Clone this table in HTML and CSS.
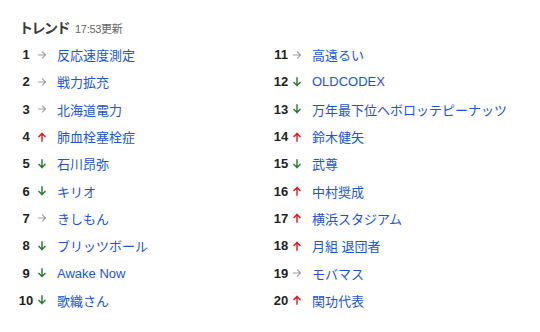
FILE: index.html
```html
<!DOCTYPE html>
<html lang="ja">
<head>
<meta charset="utf-8">
<title>トレンド</title>
<link rel="stylesheet" href="styles.css">
</head>
<body>
<div class="card">
  <div class="head"><span class="title">トレンド</span><span class="time">17:53更新</span></div>
  <ol class="list">
    <li><span class="num">1</span><span class="arw"><svg viewBox="0 0 10 10"><path class="same" d="M1.5 5H8.5M5.5 2L8.5 5L5.5 8"/></svg></span><a href="#">反応速度測定</a></li>
    <li><span class="num">2</span><span class="arw"><svg viewBox="0 0 10 10"><path class="same" d="M1.5 5H8.5M5.5 2L8.5 5L5.5 8"/></svg></span><a href="#">戦力拡充</a></li>
    <li><span class="num">3</span><span class="arw"><svg viewBox="0 0 10 10"><path class="same" d="M1.5 5H8.5M5.5 2L8.5 5L5.5 8"/></svg></span><a href="#">北海道電力</a></li>
    <li><span class="num">4</span><span class="arw"><svg viewBox="0 0 10 10"><path class="up" d="M5 9V1.5M2 4.5L5 1.5L8 4.5"/></svg></span><a href="#">肺血栓塞栓症</a></li>
    <li><span class="num">5</span><span class="arw"><svg viewBox="0 0 10 10"><path class="down" d="M5 1V8.5M2 5.5L5 8.5L8 5.5"/></svg></span><a href="#">石川昂弥</a></li>
    <li><span class="num">6</span><span class="arw"><svg viewBox="0 0 10 10"><path class="down" d="M5 1V8.5M2 5.5L5 8.5L8 5.5"/></svg></span><a href="#">キリオ</a></li>
    <li><span class="num">7</span><span class="arw"><svg viewBox="0 0 10 10"><path class="same" d="M1.5 5H8.5M5.5 2L8.5 5L5.5 8"/></svg></span><a href="#">きしもん</a></li>
    <li><span class="num">8</span><span class="arw"><svg viewBox="0 0 10 10"><path class="down" d="M5 1V8.5M2 5.5L5 8.5L8 5.5"/></svg></span><a href="#">ブリッツボール</a></li>
    <li><span class="num">9</span><span class="arw"><svg viewBox="0 0 10 10"><path class="down" d="M5 1V8.5M2 5.5L5 8.5L8 5.5"/></svg></span><a href="#">Awake Now</a></li>
    <li><span class="num">10</span><span class="arw"><svg viewBox="0 0 10 10"><path class="down" d="M5 1V8.5M2 5.5L5 8.5L8 5.5"/></svg></span><a href="#">歌織さん</a></li>
    <li><span class="num">11</span><span class="arw"><svg viewBox="0 0 10 10"><path class="same" d="M1.5 5H8.5M5.5 2L8.5 5L5.5 8"/></svg></span><a href="#">高遠るい</a></li>
    <li><span class="num">12</span><span class="arw"><svg viewBox="0 0 10 10"><path class="down" d="M5 1V8.5M2 5.5L5 8.5L8 5.5"/></svg></span><a href="#">OLDCODEX</a></li>
    <li><span class="num">13</span><span class="arw"><svg viewBox="0 0 10 10"><path class="down" d="M5 1V8.5M2 5.5L5 8.5L8 5.5"/></svg></span><a href="#">万年最下位ヘボロッテピーナッツ</a></li>
    <li><span class="num">14</span><span class="arw"><svg viewBox="0 0 10 10"><path class="up" d="M5 9V1.5M2 4.5L5 1.5L8 4.5"/></svg></span><a href="#">鈴木健矢</a></li>
    <li><span class="num">15</span><span class="arw"><svg viewBox="0 0 10 10"><path class="down" d="M5 1V8.5M2 5.5L5 8.5L8 5.5"/></svg></span><a href="#">武尊</a></li>
    <li><span class="num">16</span><span class="arw"><svg viewBox="0 0 10 10"><path class="up" d="M5 9V1.5M2 4.5L5 1.5L8 4.5"/></svg></span><a href="#">中村奨成</a></li>
    <li><span class="num">17</span><span class="arw"><svg viewBox="0 0 10 10"><path class="up" d="M5 9V1.5M2 4.5L5 1.5L8 4.5"/></svg></span><a href="#">横浜スタジアム</a></li>
    <li><span class="num">18</span><span class="arw"><svg viewBox="0 0 10 10"><path class="up" d="M5 9V1.5M2 4.5L5 1.5L8 4.5"/></svg></span><a href="#">月組 退団者</a></li>
    <li><span class="num">19</span><span class="arw"><svg viewBox="0 0 10 10"><path class="same" d="M1.5 5H8.5M5.5 2L8.5 5L5.5 8"/></svg></span><a href="#">モバマス</a></li>
    <li><span class="num">20</span><span class="arw"><svg viewBox="0 0 10 10"><path class="up" d="M5 9V1.5M2 4.5L5 1.5L8 4.5"/></svg></span><a href="#">関功代表</a></li>
  </ol>
</div>
</body>
</html>
```
FILE: styles.css
```css
html, body {
  margin: 0;
  padding: 0;
  background: #fff;
}
body {
  font-family: "Liberation Sans", "Noto Sans CJK JP", sans-serif;
  color: #222;
}
.card {
  padding: 17px 0 0 19px;
}
.head {
  display: flex;
  align-items: baseline;
  gap: 6px;
  height: 22px;
}
.title {
  font-size: 14px;
  font-weight: bold;
  letter-spacing: -1.5px;
  color: #3a3a3a;
}
.time {
  font-size: 11px;
  letter-spacing: -0.3px;
  color: #666;
}
.list {
  list-style: none;
  margin: 2px 0 0 -1px;
  padding: 0;
  display: grid;
  grid-template-columns: 255px 255px;
  grid-template-rows: repeat(10, 27.3px);
  grid-auto-flow: column;
}
.list li {
  display: flex;
  align-items: center;
}
.num {
  width: 16px;
  text-align: center;
  font-size: 13px;
  font-weight: bold;
  color: #222;
}
.arw {
  width: 16px;
  display: flex;
  justify-content: center;
  margin-right: 7px;
}
.arw svg {
  width: 10px;
  height: 10px;
  fill: none;
  stroke-width: 1.4;
  stroke-linecap: square;
}
.same { stroke: #a0a0a0; stroke-width: 1.1; }
.up { stroke: #e8101a; }
.down { stroke: #1e7a2e; }
.list a {
  font-size: 13px;
  color: #1a56d6;
  text-decoration: none;
  white-space: nowrap;
}
```
